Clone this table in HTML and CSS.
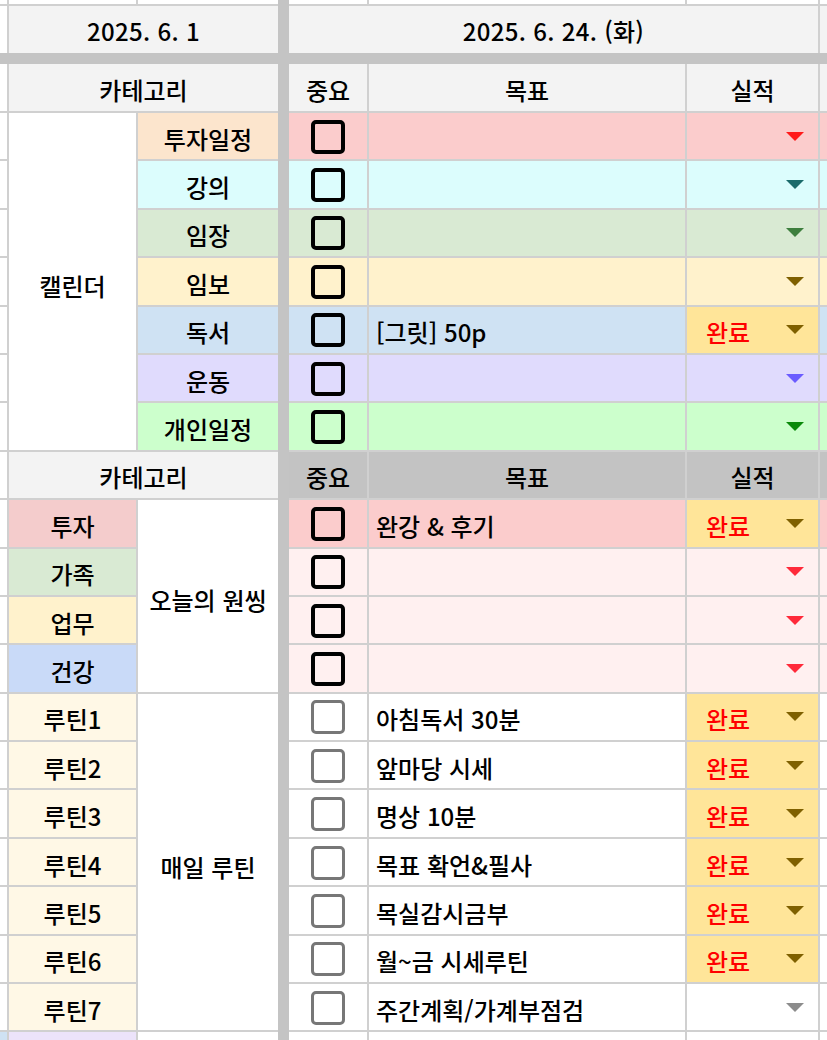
FILE: index.html
```html
<!DOCTYPE html>
<html lang="ko">
<head>
<meta charset="utf-8">
<title>Daily sheet</title>
<link rel="stylesheet" href="styles.css">
</head>
<body>
<div class="sheet">
  <div class="vsep"></div>
  <div class="hsep"></div>
  <div class="merge cal">캘린더</div>
  <div class="merge one">오늘의 원씽</div>
  <div class="merge rtn">매일 루틴</div>

  <!-- row 1: partial -->
  <div class="c"></div><div class="c"></div><div class="c"></div><div class="c"></div><div class="c"></div><div class="c"></div><div class="c"></div>

  <!-- row 2: dates -->
  <div class="c"></div>
  <div class="c hd span2 date">2025. 6. 1</div>
  <div class="c hd span3 date">2025. 6. 24. (화)</div>
  <div class="c hd"></div>

  <!-- row 4: header -->
  <div class="c"></div>
  <div class="c hd span2">카테고리</div>
  <div class="c hd">중요</div>
  <div class="c hd">목표</div>
  <div class="c hd">실적</div>
  <div class="c hd"></div>

  <!-- calendar rows -->
  <div class="c"></div>
  <div class="c lbl bg-peach">투자일정</div>
  <div class="c bg-pink"><span class="cb"></span></div>
  <div class="c txt bg-pink"></div>
  <div class="c st bg-pink"><span class="ar a-red"></span></div>
  <div class="c bg-pink"></div>

  <div class="c"></div>
  <div class="c lbl bg-cyan">강의</div>
  <div class="c bg-cyan"><span class="cb"></span></div>
  <div class="c txt bg-cyan"></div>
  <div class="c st bg-cyan"><span class="ar a-teal"></span></div>
  <div class="c bg-cyan"></div>

  <div class="c"></div>
  <div class="c lbl bg-sage">임장</div>
  <div class="c bg-sage"><span class="cb"></span></div>
  <div class="c txt bg-sage"></div>
  <div class="c st bg-sage"><span class="ar a-green"></span></div>
  <div class="c bg-sage"></div>

  <div class="c"></div>
  <div class="c lbl bg-cream">임보</div>
  <div class="c bg-cream"><span class="cb"></span></div>
  <div class="c txt bg-cream"></div>
  <div class="c st bg-cream"><span class="ar a-gold"></span></div>
  <div class="c bg-cream"></div>

  <div class="c"></div>
  <div class="c lbl bg-sky">독서</div>
  <div class="c bg-sky"><span class="cb"></span></div>
  <div class="c txt bg-sky">[그릿] 50p</div>
  <div class="c st done"><span class="dv">완료</span><span class="ar a-gold"></span></div>
  <div class="c bg-sky"></div>

  <div class="c"></div>
  <div class="c lbl bg-lav">운동</div>
  <div class="c bg-lav"><span class="cb"></span></div>
  <div class="c txt bg-lav"></div>
  <div class="c st bg-lav"><span class="ar a-violet"></span></div>
  <div class="c bg-lav"></div>

  <div class="c"></div>
  <div class="c lbl bg-lime">개인일정</div>
  <div class="c bg-lime"><span class="cb"></span></div>
  <div class="c txt bg-lime"></div>
  <div class="c st bg-lime"><span class="ar a-dgreen"></span></div>
  <div class="c bg-lime"></div>

  <!-- header 2 -->
  <div class="c"></div>
  <div class="c hd span2">카테고리</div>
  <div class="c hd2">중요</div>
  <div class="c hd2">목표</div>
  <div class="c hd2">실적</div>
  <div class="c hd2"></div>

  <!-- one thing rows -->
  <div class="c"></div>
  <div class="c lbl bg-rose">투자</div>
  <div class="c bg-pink"><span class="cb"></span></div>
  <div class="c txt bg-pink">완강 &amp; 후기</div>
  <div class="c st done"><span class="dv">완료</span><span class="ar a-gold"></span></div>
  <div class="c bg-pink"></div>

  <div class="c"></div>
  <div class="c lbl bg-sage">가족</div>
  <div class="c bg-blush"><span class="cb"></span></div>
  <div class="c txt bg-blush"></div>
  <div class="c st bg-blush"><span class="ar a-pred"></span></div>
  <div class="c bg-blush"></div>

  <div class="c"></div>
  <div class="c lbl bg-cream">업무</div>
  <div class="c bg-blush"><span class="cb"></span></div>
  <div class="c txt bg-blush"></div>
  <div class="c st bg-blush"><span class="ar a-pred"></span></div>
  <div class="c bg-blush"></div>

  <div class="c"></div>
  <div class="c lbl bg-corn">건강</div>
  <div class="c bg-blush"><span class="cb"></span></div>
  <div class="c txt bg-blush"></div>
  <div class="c st bg-blush"><span class="ar a-pred"></span></div>
  <div class="c bg-blush"></div>

  <!-- routines -->
  <div class="c"></div>
  <div class="c lbl bg-ivory">루틴1</div>
  <div class="c"><span class="cb gray"></span></div>
  <div class="c txt">아침독서 30분</div>
  <div class="c st done"><span class="dv">완료</span><span class="ar a-gold"></span></div>
  <div class="c"></div>

  <div class="c"></div>
  <div class="c lbl bg-ivory">루틴2</div>
  <div class="c"><span class="cb gray"></span></div>
  <div class="c txt">앞마당 시세</div>
  <div class="c st done"><span class="dv">완료</span><span class="ar a-gold"></span></div>
  <div class="c"></div>

  <div class="c"></div>
  <div class="c lbl bg-ivory">루틴3</div>
  <div class="c"><span class="cb gray"></span></div>
  <div class="c txt">명상 10분</div>
  <div class="c st done"><span class="dv">완료</span><span class="ar a-gold"></span></div>
  <div class="c"></div>

  <div class="c"></div>
  <div class="c lbl bg-ivory">루틴4</div>
  <div class="c"><span class="cb gray"></span></div>
  <div class="c txt">목표 확언&amp;필사</div>
  <div class="c st done"><span class="dv">완료</span><span class="ar a-gold"></span></div>
  <div class="c"></div>

  <div class="c"></div>
  <div class="c lbl bg-ivory">루틴5</div>
  <div class="c"><span class="cb gray"></span></div>
  <div class="c txt">목실감시금부</div>
  <div class="c st done"><span class="dv">완료</span><span class="ar a-gold"></span></div>
  <div class="c"></div>

  <div class="c"></div>
  <div class="c lbl bg-ivory">루틴6</div>
  <div class="c"><span class="cb gray"></span></div>
  <div class="c txt">월~금 시세루틴</div>
  <div class="c st done"><span class="dv">완료</span><span class="ar a-gold"></span></div>
  <div class="c"></div>

  <div class="c"></div>
  <div class="c lbl bg-ivory">루틴7</div>
  <div class="c"><span class="cb gray"></span></div>
  <div class="c txt">주간계획/가계부점검</div>
  <div class="c st"><span class="ar a-gray"></span></div>
  <div class="c"></div>

  <!-- partial bottom row -->
  <div class="c bg-sky"></div>
  <div class="c bg-lilac"></div>
  <div class="c"></div>
  <div class="c"></div>
  <div class="c"></div>
  <div class="c"></div>
  <div class="c"></div>
</div>
</body>
</html>
```

FILE: styles.css
```css
html, body {
  margin: 0;
  padding: 0;
  background: #ffffff;
  overflow: hidden;
}

body {
  width: 827px;
  height: 1040px;
  font-family: "Noto Sans CJK KR", "Noto Sans", sans-serif;
  font-size: 24px;
  font-weight: 500;
  color: #000000;
}

.sheet {
  display: grid;
  grid-template-columns: 7px 127px 140px 7px 78px 316px 131px 40px;
  grid-template-rows: 4px 47px 7px 47px repeat(19, 46.4px) 30px;
  gap: 2px;
  background: #d0d0d0;
  width: 860px;
}

.c {
  background: #ffffff;
  display: flex;
  align-items: center;
  justify-content: center;
  padding-top: 4px;
  box-sizing: border-box;
  white-space: nowrap;
  overflow: hidden;
}

.vsep {
  grid-column: 4;
  grid-row: 1 / -1;
  background: #c4c4c4;
  margin: 0 -2px;
}

.hsep {
  grid-column: 1 / -1;
  grid-row: 3;
  background: #c4c4c4;
  margin: -2px 0;
}

.merge {
  background: #ffffff;
  display: flex;
  align-items: center;
  justify-content: center;
  padding-top: 8px;
  box-sizing: border-box;
}

.cal { grid-column: 2; grid-row: 5 / span 7; }
.one { grid-column: 3; grid-row: 13 / span 4; }
.rtn { grid-column: 3; grid-row: 17 / span 7; }

.span2 { grid-column: span 2; }
.span3 { grid-column: span 3; }

.hd { background: #f3f3f3; }
.hd2 { background: #c3c3c3; }
.date { padding-top: 2px; letter-spacing: 0.3px; }

.txt {
  justify-content: flex-start;
  padding-left: 7px;
}

.st {
  justify-content: flex-start;
  padding-left: 19px;
  padding-right: 14px;
}

.dv { color: #ff0000; }

.ar {
  margin-left: auto;
  width: 0;
  height: 0;
  border-left: 9px solid transparent;
  border-right: 9px solid transparent;
  border-top: 9px solid #7f6000;
  margin-top: -4px;
}

.a-red { border-top-color: #ff1a1a; }
.a-teal { border-top-color: #1b6b6b; }
.a-green { border-top-color: #3e7f3e; }
.a-gold { border-top-color: #7f6000; }
.a-violet { border-top-color: #6b5cff; }
.a-dgreen { border-top-color: #0a8a0a; }
.a-pred { border-top-color: #ff2a3a; }
.a-gray { border-top-color: #8c8c8c; }

.cb {
  width: 34px;
  height: 34px;
  box-sizing: border-box;
  border: 4px solid #000000;
  border-radius: 5px;
  margin-top: -3px;
}

.cb.gray {
  border: 3px solid #777777;
}

.done { background: #ffe599; }

.bg-peach { background: #fce5cd; }
.bg-pink { background: #fbcccc; }
.bg-rose { background: #f4cccc; }
.bg-cyan { background: #dcfdfd; }
.bg-sage { background: #d9ead3; }
.bg-cream { background: #fff2cc; }
.bg-sky { background: #cfe2f3; }
.bg-lav { background: #e0dbfd; }
.bg-lime { background: #ccffcc; }
.bg-blush { background: #fff0f0; }
.bg-corn { background: #c9daf8; }
.bg-ivory { background: #fff8e6; }
.bg-lilac { background: #ece3fa; }
```
